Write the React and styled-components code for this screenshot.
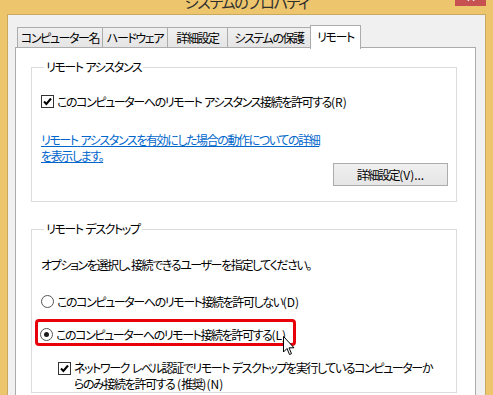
import React from 'react';
import styled, { createGlobalStyle } from 'styled-components';

const GlobalStyle = createGlobalStyle`
  html, body {
    margin: 0;
    padding: 0;
    background: #edc56c;
    overflow: hidden;
  }
  body {
    font-family: "Noto Sans CJK JP", "Noto Sans", sans-serif;
    font-size: 12px;
    font-feature-settings: "palt";
    letter-spacing: -1.4px;
    color: #000;
  }
`;

const Frame = styled.div`
  width: 493px;
  height: 395px;
  padding: 0 7px;
  box-sizing: border-box;
  overflow: hidden;
`;

const TitleBar = styled.div`
  height: 14px;
  display: flex;
  align-items: flex-start;
  margin: 0 -7px;
  overflow: hidden;
`;

const TitleSide = styled.div`
  flex: 1;
  display: flex;
  justify-content: flex-end;
`;

const TitleText = styled.div`
  font-size: 15px;
  line-height: 15px;
  margin-top: -6px;
  color: #2e2e2e;
  letter-spacing: -1.2px;
`;

const CloseButton = styled.div`
  flex: none;
  width: 31px;
  height: 6px;
  margin-right: 7px;
  background-color: #c75050;
  display: flex;
  justify-content: center;
`;

const Dialog = styled.div`
  background: #f0f0f0;
  border: 1px solid #c9a860;
  border-bottom: none;
  height: 400px;
  padding: 10px 9px 0 7px;
`;

const TabRow = styled.div`
  display: flex;
  align-items: flex-end;
  height: 24px;
  margin-left: 2px;
`;

const Tab = styled.div`
  position: relative;
  z-index: ${(p) => (p.$active ? 1 : 0)};
  width: ${(p) => p.$w}px;
  height: ${(p) => (p.$active ? 24 : 21)}px;
  margin-bottom: ${(p) => (p.$active ? 0 : 1)}px;
  margin-left: ${(p) => (p.$first ? 0 : -1)}px;
  box-sizing: border-box;
  border: 1px solid #acacac;
  border-bottom: ${(p) => (p.$active ? 'none' : '1px solid #acacac')};
  background: ${(p) => (p.$active ? '#fff' : 'linear-gradient(#f0f0f0, #e5e5e5)')};
  display: flex;
  align-items: ${(p) => (p.$active ? 'flex-start' : 'center')};
  padding-top: ${(p) => (p.$active ? 3 : 0)}px;
  justify-content: center;
  line-height: 16px;
  white-space: nowrap;
`;

const Panel = styled.div`
  margin-top: -2px;
  background: #fff;
  border: 1px solid #acacac;
  height: 400px;
  padding: 12px 18px 0 15px;
`;

const Group = styled.fieldset`
  margin: ${(p) => p.$top || 0}px 0 0;
  padding: 0 8px ${(p) => p.$bottom || 0}px 9px;
  border: 1px solid #dcdcdc;
  min-width: 0;
`;

const Legend = styled.legend`
  margin-left: 3px;
  padding: 0 2px;
  line-height: 14px;
`;

const Latin = styled.span`
  letter-spacing: 0;
`;

const Row = styled.div`
  display: flex;
  align-items: center;
  height: 16px;
  margin-top: ${(p) => p.$top || 0}px;
  white-space: pre;
`;

const CheckBox = styled.span`
  width: 13px;
  height: 13px;
  box-sizing: border-box;
  border: 1px solid #333;
  background: #fff;
  display: inline-flex;
  align-items: center;
  justify-content: center;
  margin-right: 3px;
  flex: none;
  align-self: ${(p) => (p.$top ? 'flex-start' : 'center')};
  margin-top: ${(p) => (p.$top ? 2 : 0)}px;
`;

const Radio = styled.span`
  width: 13px;
  height: 13px;
  box-sizing: border-box;
  border: 1px solid #555;
  border-radius: 50%;
  background: #fff;
  display: inline-flex;
  align-items: center;
  justify-content: center;
  margin-right: 3px;
  flex: none;
  &::after {
    content: '';
    display: ${(p) => (p.$checked ? 'block' : 'none')};
    width: 5px;
    height: 5px;
    border-radius: 50%;
    background: #1a1a1a;
  }
`;

const HelpLink = styled.a`
  display: block;
  margin-top: 23px;
  line-height: 16px;
  color: #0066cc;
  text-decoration: underline;
  cursor: pointer;
  white-space: pre;
`;

const ButtonRow = styled.div`
  display: flex;
  justify-content: flex-end;
  margin-top: -1px;
`;

const Button = styled.button`
  width: 115px;
  height: 23px;
  border: 1px solid #acacac;
  background: linear-gradient(#f0f0f0, #e5e5e5);
  font: inherit;
  letter-spacing: inherit;
  color: #000;
  padding: 0;
  margin: 0;
`;

const Text = styled.div`
  margin-top: ${(p) => p.$top || 0}px;
  line-height: 16px;
  white-space: nowrap;
`;

const Highlight = styled.div`
  position: relative;
  width: 261px;
  box-sizing: border-box;
  margin: 10px 0 0 -6px;
  padding: 4px 0 1px 2px;
  border: 3px solid #e8000b;
  border-radius: 4px;
`;

const Cursor = styled.svg`
  position: absolute;
  left: 245px;
  top: 14px;
`;

const CheckRow = styled.div`
  display: flex;
  margin: 14px 0 0 17px;
`;

const CheckText = styled.div`
  line-height: 16px;
  white-space: pre;
`;

function CheckMark() {
  return (
    <svg width="9" height="9" viewBox="0 0 9 9">
      <path d="M1 4.5 L3.4 7 L8 1.5" fill="none" stroke="#000" strokeWidth="2" />
    </svg>
  );
}

export default function App() {
  const tabs = [
    { label: 'コンピューター名', w: 86 },
    { label: 'ハードウェア', w: 66 },
    { label: '詳細設定', w: 61 },
    { label: 'システムの保護', w: 84 },
    { label: 'リモート', w: 51, active: true },
  ];
  return (
    <Frame>
      <GlobalStyle />
      <TitleBar>
        <TitleSide />
        <TitleText>システムのプロパティ</TitleText>
        <TitleSide>
          <CloseButton>
            <svg width="12" height="6" viewBox="0 0 12 6">
              <path d="M1 -3 L4 0.5 M11 -3 L8 0.5" stroke="#fff" strokeWidth="2" />
            </svg>
          </CloseButton>
        </TitleSide>
      </TitleBar>
      <Dialog>
        <TabRow>
          {tabs.map((t, i) => (
            <Tab key={t.label} $w={t.w} $active={t.active} $first={i === 0}>
              {t.label}
            </Tab>
          ))}
        </TabRow>
        <Panel>
          <Group $bottom={15}>
            <Legend>
              リモート<Latin> </Latin>アシスタンス
            </Legend>
            <Row $top={19}>
              <CheckBox>
                <CheckMark />
              </CheckBox>
              このコンピューターへのリモート<Latin> </Latin>アシスタンス接続を許可する<Latin>(R)</Latin>
            </Row>
            <HelpLink>
              リモート<Latin> </Latin>アシスタンスを有効にした場合の動作についての詳細
              <br />
              を表示します。
            </HelpLink>
            <ButtonRow>
              <Button>
                詳細設定<Latin>(V)...</Latin>
              </Button>
            </ButtonRow>
          </Group>
          <Group $top={20}>
            <Legend>
              リモート<Latin> </Latin>デスクトップ
            </Legend>
            <Text $top={21}>オプションを選択し、接続できるユーザーを指定してください。</Text>
            <Row $top={20}>
              <Radio />
              このコンピューターへのリモート接続を許可しない<Latin>(D)</Latin>
            </Row>
            <Highlight>
              <Row>
                <Radio $checked />
                このコンピューターへのリモート接続を許可する<Latin>(L)</Latin>
              </Row>
              <Cursor width="12" height="20" viewBox="0 0 12 20">
                <path
                  d="M0.5 0.5 L0.5 16 L4 12.5 L6.5 18.5 L8.5 17.7 L6 11.8 L11 11.8 Z"
                  fill="#fff"
                  stroke="#000"
                  strokeWidth="1"
                  strokeLinejoin="round"
                />
              </Cursor>
            </Highlight>
            <CheckRow>
              <CheckBox $top>
                <CheckMark />
              </CheckBox>
              <CheckText>
                ネットワーク<Latin> </Latin>レベル認証でリモート<Latin> </Latin>デスクトップを実行しているコンピューターか
                <br />
                らのみ接続を許可する<Latin> (</Latin>推奨<Latin>)(N)</Latin>
              </CheckText>
            </CheckRow>
          </Group>
        </Panel>
      </Dialog>
    </Frame>
  );
}
